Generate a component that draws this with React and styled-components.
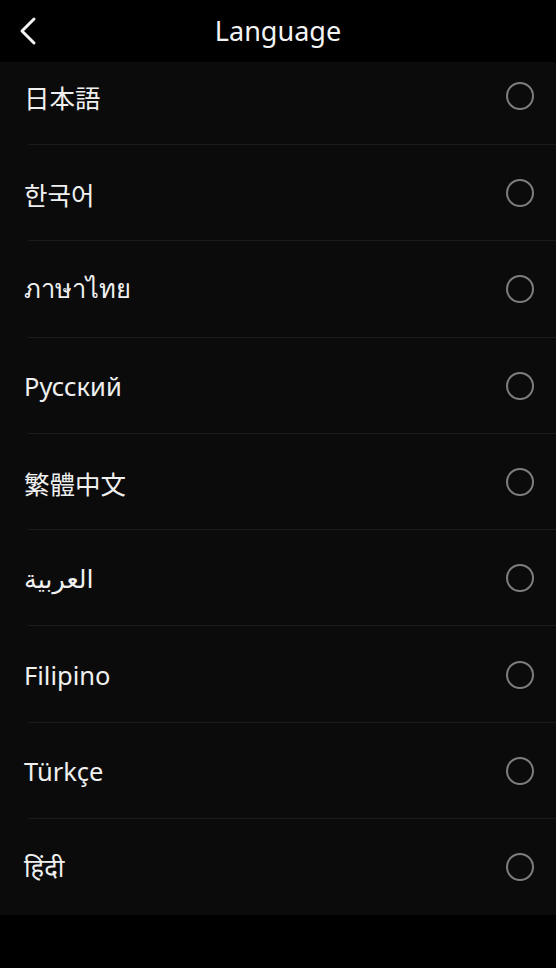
import styled, { createGlobalStyle } from "styled-components";

const languages = [
  "日本語",
  "한국어",
  "ภาษาไทย",
  "Русский",
  "繁體中文",
  "العربية",
  "Filipino",
  "Türkçe",
  "हिंदी",
];

const GlobalStyle = createGlobalStyle`
  html, body {
    margin: 0;
    padding: 0;
    background: #000;
  }
  body {
    font-family: "Noto Sans", "Open Sans", "Noto Sans CJK JP", "Noto Sans CJK KR", "DejaVu Sans", sans-serif;
    color: #f2f2f2;
  }
`;

const Screen = styled.div`
  width: 556px;
  height: 968px;
  background: #000;
  display: flex;
  flex-direction: column;
`;

const Header = styled.header`
  height: 62px;
  display: grid;
  grid-template-columns: 60px 1fr 60px;
  align-items: center;
  background: #000;
`;

const BackButton = styled.button`
  background: none;
  border: none;
  padding: 0 0 0 18px;
  height: 62px;
  display: flex;
  align-items: center;
  cursor: pointer;
`;

const Title = styled.h1`
  margin: 0;
  text-align: center;
  font-size: 27px;
  font-weight: 400;
  color: #f4f4f4;
  line-height: 60px;
`;

const List = styled.ul`
  list-style: none;
  margin: 0;
  padding: 0;
  background: #0b0b0b;
`;

// first row is partly scrolled under the header
const Row = styled.li`
  height: ${(p) => (p.$partial ? "83px" : "96.3px")};
  padding-bottom: ${(p) => (p.$partial ? "15px" : "0")};
  box-sizing: border-box;
  display: flex;
  align-items: center;
  justify-content: space-between;
  padding-left: 24px;
  padding-right: 22px;
  position: relative;

  &:not(:first-child)::before {
    content: "";
    position: absolute;
    top: -1px;
    left: 28px;
    right: 0;
    height: 1px;
    background: #1b1b1b;
  }
`;

const Label = styled.span`
  font-size: 25.5px;
  color: #f0f0f0;
`;

const Radio = styled.span`
  width: 24px;
  height: 24px;
  border-radius: 50%;
  border: 2px solid #7d7d7d;
`;

export default function App() {
  return (
    <>
      <GlobalStyle />
      <Screen>
        <Header>
          <BackButton aria-label="Back">
            <svg width="22" height="30" viewBox="0 0 22 30">
              <path
                d="M16 3 L4 15 L16 27"
                fill="none"
                stroke="#f4f4f4"
                strokeWidth="3"
                strokeLinecap="round"
                strokeLinejoin="round"
              />
            </svg>
          </BackButton>
          <Title>Language</Title>
          <span />
        </Header>
        <List>
          {languages.map((lang, i) => (
            <Row key={lang} $partial={i === 0}>
              <Label>{lang}</Label>
              <Radio />
            </Row>
          ))}
        </List>
      </Screen>
    </>
  );
}
